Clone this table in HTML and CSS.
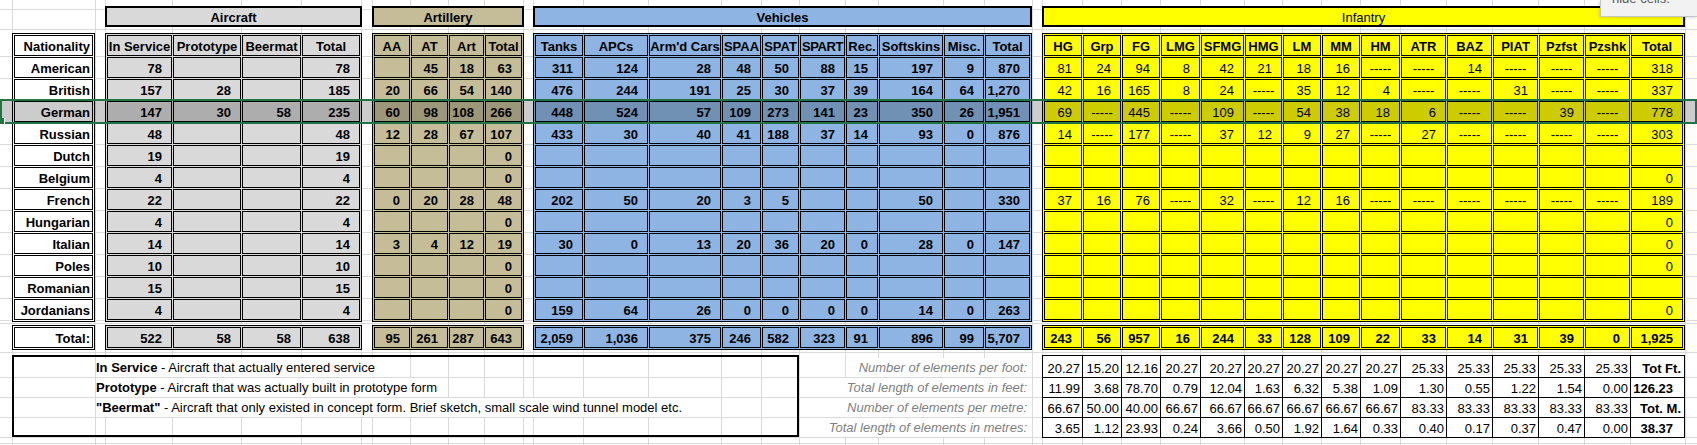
FILE: index.html
```html
<!DOCTYPE html>
<html>
<head>
<meta charset="utf-8">
<title>Unit counts</title>
<link rel="stylesheet" href="styles.css">
</head>
<body>
<div class="sheet">
  <div class="band heads">
    <div class="gh air g-air">Aircraft</div>
    <div class="gh art g-art">Artillery</div>
    <div class="gh veh g-veh">Vehicles</div>
    <div class="gh inf g-inf">Infantry</div>
  </div>

  <div class="band main">
    <div class="tbl nat g-nat">
      <span>Nationality</span><span>American</span><span>British</span><span>German</span><span>Russian</span><span>Dutch</span><span>Belgium</span><span>French</span><span>Hungarian</span><span>Italian</span><span>Poles</span><span>Romanian</span><span>Jordanians</span>
    </div>
    <div class="tbl air g-air">
      <span class="h">In Service</span><span class="h">Prototype</span><span class="h">Beermat</span><span class="h">Total</span>
      <span>78</span><span></span><span></span><span>78</span>
      <span>157</span><span>28</span><span></span><span>185</span>
      <span>147</span><span>30</span><span>58</span><span>235</span>
      <span>48</span><span></span><span></span><span>48</span>
      <span>19</span><span></span><span></span><span>19</span>
      <span>4</span><span></span><span></span><span>4</span>
      <span>22</span><span></span><span></span><span>22</span>
      <span>4</span><span></span><span></span><span>4</span>
      <span>14</span><span></span><span></span><span>14</span>
      <span>10</span><span></span><span></span><span>10</span>
      <span>15</span><span></span><span></span><span>15</span>
      <span>4</span><span></span><span></span><span>4</span>
    </div>
    <div class="tbl art g-art">
      <span class="h">AA</span><span class="h">AT</span><span class="h">Art</span><span class="h">Total</span>
      <span></span><span>45</span><span>18</span><span>63</span>
      <span>20</span><span>66</span><span>54</span><span>140</span>
      <span>60</span><span>98</span><span>108</span><span>266</span>
      <span>12</span><span>28</span><span>67</span><span>107</span>
      <span></span><span></span><span></span><span>0</span>
      <span></span><span></span><span></span><span>0</span>
      <span>0</span><span>20</span><span>28</span><span>48</span>
      <span></span><span></span><span></span><span>0</span>
      <span>3</span><span>4</span><span>12</span><span>19</span>
      <span></span><span></span><span></span><span>0</span>
      <span></span><span></span><span></span><span>0</span>
      <span></span><span></span><span></span><span>0</span>
    </div>
    <div class="tbl veh g-veh">
      <span class="h">Tanks</span><span class="h">APCs</span><span class="h">Arm'd Cars</span><span class="h">SPAA</span><span class="h">SPAT</span><span class="h tight">SPART</span><span class="h">Rec.</span><span class="h">Softskins</span><span class="h">Misc.</span><span class="h">Total</span>
      <span>311</span><span>124</span><span>28</span><span>48</span><span>50</span><span>88</span><span>15</span><span>197</span><span>9</span><span>870</span>
      <span>476</span><span>244</span><span>191</span><span>25</span><span>30</span><span>37</span><span>39</span><span>164</span><span>64</span><span>1,270</span>
      <span>448</span><span>524</span><span>57</span><span>109</span><span>273</span><span>141</span><span>23</span><span>350</span><span>26</span><span>1,951</span>
      <span>433</span><span>30</span><span>40</span><span>41</span><span>188</span><span>37</span><span>14</span><span>93</span><span>0</span><span>876</span>
      <span></span><span></span><span></span><span></span><span></span><span></span><span></span><span></span><span></span><span></span>
      <span></span><span></span><span></span><span></span><span></span><span></span><span></span><span></span><span></span><span></span>
      <span>202</span><span>50</span><span>20</span><span>3</span><span>5</span><span></span><span></span><span>50</span><span></span><span>330</span>
      <span></span><span></span><span></span><span></span><span></span><span></span><span></span><span></span><span></span><span></span>
      <span>30</span><span>0</span><span>13</span><span>20</span><span>36</span><span>20</span><span>0</span><span>28</span><span>0</span><span>147</span>
      <span></span><span></span><span></span><span></span><span></span><span></span><span></span><span></span><span></span><span></span>
      <span></span><span></span><span></span><span></span><span></span><span></span><span></span><span></span><span></span><span></span>
      <span>159</span><span>64</span><span>26</span><span>0</span><span>0</span><span>0</span><span>0</span><span>14</span><span>0</span><span>263</span>
    </div>
    <div class="tbl inf g-inf">
      <span class="h">HG</span><span class="h">Grp</span><span class="h">FG</span><span class="h">LMG</span><span class="h">SFMG</span><span class="h">HMG</span><span class="h">LM</span><span class="h">MM</span><span class="h">HM</span><span class="h">ATR</span><span class="h">BAZ</span><span class="h">PIAT</span><span class="h">Pzfst</span><span class="h">Pzshk</span><span class="h">Total</span>
      <span>81</span><span>24</span><span>94</span><span>8</span><span>42</span><span>21</span><span>18</span><span>16</span><span class="d">-----</span><span class="d">-----</span><span>14</span><span class="d">-----</span><span class="d">-----</span><span class="d">-----</span><span>318</span>
      <span>42</span><span>16</span><span>165</span><span>8</span><span>24</span><span class="d">-----</span><span>35</span><span>12</span><span>4</span><span class="d">-----</span><span class="d">-----</span><span>31</span><span class="d">-----</span><span class="d">-----</span><span>337</span>
      <span>69</span><span class="d">-----</span><span>445</span><span class="d">-----</span><span>109</span><span class="d">-----</span><span>54</span><span>38</span><span>18</span><span>6</span><span class="d">-----</span><span class="d">-----</span><span>39</span><span class="d">-----</span><span>778</span>
      <span>14</span><span class="d">-----</span><span>177</span><span class="d">-----</span><span>37</span><span>12</span><span>9</span><span>27</span><span class="d">-----</span><span>27</span><span class="d">-----</span><span class="d">-----</span><span class="d">-----</span><span class="d">-----</span><span>303</span>
      <span></span><span></span><span></span><span></span><span></span><span></span><span></span><span></span><span></span><span></span><span></span><span></span><span></span><span></span><span></span>
      <span></span><span></span><span></span><span></span><span></span><span></span><span></span><span></span><span></span><span></span><span></span><span></span><span></span><span></span><span>0</span>
      <span>37</span><span>16</span><span>76</span><span class="d">-----</span><span>32</span><span class="d">-----</span><span>12</span><span>16</span><span class="d">-----</span><span class="d">-----</span><span class="d">-----</span><span class="d">-----</span><span class="d">-----</span><span class="d">-----</span><span>189</span>
      <span></span><span></span><span></span><span></span><span></span><span></span><span></span><span></span><span></span><span></span><span></span><span></span><span></span><span></span><span>0</span>
      <span></span><span></span><span></span><span></span><span></span><span></span><span></span><span></span><span></span><span></span><span></span><span></span><span></span><span></span><span>0</span>
      <span></span><span></span><span></span><span></span><span></span><span></span><span></span><span></span><span></span><span></span><span></span><span></span><span></span><span></span><span>0</span>
      <span></span><span></span><span></span><span></span><span></span><span></span><span></span><span></span><span></span><span></span><span></span><span></span><span></span><span></span><span></span>
      <span></span><span></span><span></span><span></span><span></span><span></span><span></span><span></span><span></span><span></span><span></span><span></span><span></span><span></span><span>0</span>
    </div>
  </div>

  <div class="band totals">
    <div class="tbl nat g-nat"><span>Total:</span></div>
    <div class="tbl air g-air"><span>522</span><span>58</span><span>58</span><span>638</span></div>
    <div class="tbl art g-art"><span>95</span><span>261</span><span>287</span><span>643</span></div>
    <div class="tbl veh g-veh"><span>2,059</span><span>1,036</span><span>375</span><span>246</span><span>582</span><span>323</span><span>91</span><span>896</span><span>99</span><span>5,707</span></div>
    <div class="tbl inf inf-tot g-inf"><span>243</span><span>56</span><span>957</span><span>16</span><span>244</span><span>33</span><span>128</span><span>109</span><span>22</span><span>33</span><span>14</span><span>31</span><span>39</span><span>0</span><span>1,925</span></div>
  </div>

  <div class="band bottom">
    <div class="notes">
      <div class="nrow"><span><b>In Service</b> - Aircraft that actually entered service</span></div>
      <div class="nrow"><span><b>Prototype</b> - Aircraft that was actually built in prototype form</span></div>
      <div class="nrow"><span><b>"Beermat"</b> - Aircraft that only existed in concept form. Brief sketch, small scale wind tunnel model etc.</span></div>
    </div>
    <div class="labels">
      <div class="lab"><span>Number of elements per foot:</span></div>
      <div class="lab"><span>Total length of elements in feet:</span></div>
      <div class="lab"><span>Number of elements per metre:</span></div>
      <div class="lab"><span>Total length of elements in metres:</span></div>
    </div>
    <div class="calc">
      <span>20.27</span><span>15.20</span><span>12.16</span><span>20.27</span><span>20.27</span><span>20.27</span><span>20.27</span><span>20.27</span><span>20.27</span><span>25.33</span><span>25.33</span><span>25.33</span><span>25.33</span><span>25.33</span><span class="k">Tot Ft.</span>
      <span>11.99</span><span>3.68</span><span>78.70</span><span>0.79</span><span>12.04</span><span>1.63</span><span>6.32</span><span>5.38</span><span>1.09</span><span>1.30</span><span>0.55</span><span>1.22</span><span>1.54</span><span>0.00</span><span class="t">126.23</span>
      <span>66.67</span><span>50.00</span><span>40.00</span><span>66.67</span><span>66.67</span><span>66.67</span><span>66.67</span><span>66.67</span><span>66.67</span><span>83.33</span><span>83.33</span><span>83.33</span><span>83.33</span><span>83.33</span><span class="k">Tot. M.</span>
      <span>3.65</span><span>1.12</span><span>23.93</span><span>0.24</span><span>3.66</span><span>0.50</span><span>1.92</span><span>1.64</span><span>0.33</span><span>0.40</span><span>0.17</span><span>0.37</span><span>0.47</span><span>0.00</span><span class="t">38.37</span>
    </div>
  </div>

  <div class="sel"><span class="handle"></span></div>
  <div class="tip"><span>hide cells.</span></div>
</div>
</body>
</html>
```

FILE: styles.css
```css
* { box-sizing: border-box; }

body {
  margin: 0;
  background: #fff;
  font-family: "Liberation Sans", Arial, sans-serif;
  font-size: 13px;
  color: #000;
}

.sheet {
  position: relative;
  width: 1697px;
  height: 445px;
  overflow: hidden;
  padding-top: 6px;
  background:
    linear-gradient(#dadada, #dadada) 0 9px / 100% 1px no-repeat,
    linear-gradient(#dadada, #dadada) 0 29px / 100% 1px no-repeat,
    repeating-linear-gradient(to bottom, transparent 0 21px, #dadada 21px 22px) 0 35px / 100% 286px no-repeat,
    linear-gradient(#dadada, #dadada) 0 323px / 100% 1px no-repeat,
    linear-gradient(#dadada, #dadada) 0 352px / 100% 1px no-repeat,
    linear-gradient(#dadada, #dadada) 0 377px / 100% 1px no-repeat,
    linear-gradient(#dadada, #dadada) 0 397px / 100% 1px no-repeat,
    linear-gradient(#dadada, #dadada) 0 417px / 100% 1px no-repeat,
    linear-gradient(#dadada, #dadada) 0 437px / 100% 1px no-repeat,
    linear-gradient(#dadada, #dadada) 0 443px / 100% 1px no-repeat,
    linear-gradient(#dadada, #dadada) 12px 0 / 1px 100% no-repeat,
    linear-gradient(#dadada, #dadada) 95px 0 / 1px 100% no-repeat,
    linear-gradient(#dadada, #dadada) 105px 0 / 1px 100% no-repeat,
    linear-gradient(#dadada, #dadada) 172px 0 / 1px 100% no-repeat,
    linear-gradient(#dadada, #dadada) 241px 0 / 1px 100% no-repeat,
    linear-gradient(#dadada, #dadada) 301px 0 / 1px 100% no-repeat,
    linear-gradient(#dadada, #dadada) 361px 0 / 1px 100% no-repeat,
    linear-gradient(#dadada, #dadada) 372px 0 / 1px 100% no-repeat,
    linear-gradient(#dadada, #dadada) 410px 0 / 1px 100% no-repeat,
    linear-gradient(#dadada, #dadada) 448px 0 / 1px 100% no-repeat,
    linear-gradient(#dadada, #dadada) 484px 0 / 1px 100% no-repeat,
    linear-gradient(#dadada, #dadada) 523px 0 / 1px 100% no-repeat,
    linear-gradient(#dadada, #dadada) 533px 0 / 1px 100% no-repeat,
    linear-gradient(#dadada, #dadada) 583px 0 / 1px 100% no-repeat,
    linear-gradient(#dadada, #dadada) 648px 0 / 1px 100% no-repeat,
    linear-gradient(#dadada, #dadada) 721px 0 / 1px 100% no-repeat,
    linear-gradient(#dadada, #dadada) 761px 0 / 1px 100% no-repeat,
    linear-gradient(#dadada, #dadada) 799px 0 / 1px 100% no-repeat,
    linear-gradient(#dadada, #dadada) 845px 0 / 1px 100% no-repeat,
    linear-gradient(#dadada, #dadada) 878px 0 / 1px 100% no-repeat,
    linear-gradient(#dadada, #dadada) 943px 0 / 1px 100% no-repeat,
    linear-gradient(#dadada, #dadada) 984px 0 / 1px 100% no-repeat,
    linear-gradient(#dadada, #dadada) 1032px 0 / 1px 100% no-repeat,
    linear-gradient(#dadada, #dadada) 1042px 0 / 1px 100% no-repeat,
    linear-gradient(#dadada, #dadada) 1082px 0 / 1px 100% no-repeat,
    linear-gradient(#dadada, #dadada) 1121px 0 / 1px 100% no-repeat,
    linear-gradient(#dadada, #dadada) 1160px 0 / 1px 100% no-repeat,
    linear-gradient(#dadada, #dadada) 1200px 0 / 1px 100% no-repeat,
    linear-gradient(#dadada, #dadada) 1244px 0 / 1px 100% no-repeat,
    linear-gradient(#dadada, #dadada) 1282px 0 / 1px 100% no-repeat,
    linear-gradient(#dadada, #dadada) 1321px 0 / 1px 100% no-repeat,
    linear-gradient(#dadada, #dadada) 1360px 0 / 1px 100% no-repeat,
    linear-gradient(#dadada, #dadada) 1400px 0 / 1px 100% no-repeat,
    linear-gradient(#dadada, #dadada) 1446px 0 / 1px 100% no-repeat,
    linear-gradient(#dadada, #dadada) 1492px 0 / 1px 100% no-repeat,
    linear-gradient(#dadada, #dadada) 1538px 0 / 1px 100% no-repeat,
    linear-gradient(#dadada, #dadada) 1584px 0 / 1px 100% no-repeat,
    linear-gradient(#dadada, #dadada) 1630px 0 / 1px 100% no-repeat,
    linear-gradient(#dadada, #dadada) 1685px 0 / 1px 100% no-repeat,
    #fff;
}

/* column bands shared by every block row */
.band {
  display: grid;
  grid-template-columns: 12px 83px 10px 257px 10px 152px 9px 499px 10px 643px;
}
.heads { height: 21px; margin-bottom: 6px; }
.totals { margin-top: 3px; }
.bottom {
  margin-top: 5px;
  grid-template-columns: 12px 787px 243px 643px;
}

.g-nat { grid-column: 2; }
.g-air { grid-column: 4; }
.g-art { grid-column: 6; }
.g-veh { grid-column: 8; }
.g-inf { grid-column: 10; }

.air { background: #d9d9d9; }
.art { background: #c4bd97; }
.veh { background: #8db4e2; }
.inf { background: #ffff00; }
.nat { background: #fff; }

/* group headers */
.gh {
  height: 21px;
  border: 2px solid #000;
  font-weight: bold;
  text-align: center;
  line-height: 20px;
  white-space: nowrap;
}

/* bordered data blocks */
.tbl {
  display: grid;
  gap: 1px;
  padding: 1px;
  border: 1px solid #000;
  grid-auto-rows: 21px;
  font-weight: bold;
}
.tbl > span {
  display: flex;
  align-items: flex-end;
  justify-content: flex-end;
  border: 1px solid #000;
  line-height: 15px;
  padding: 0 9px 1px 0;
  white-space: nowrap;
}
.tbl > .h,
.tbl > .d {
  justify-content: center;
  padding-right: 0;
}
.tbl > .tight { letter-spacing: -0.4px; }

.nat { grid-template-columns: 79px; }
.nat > span { padding-right: 2px; }
.air { grid-template-columns: 65px 68px 59px 58px; }
.art { grid-template-columns: 36px 37px 35px 37px; }
.veh { grid-template-columns: 48px 64px 72px 39px 37px 45px 32px 64px 40px 45px; }
.inf {
  grid-template-columns: 38px 38px 38px 39px 43px 37px 38px 38px 39px 45px 45px 45px 45px 45px 52px;
  font-weight: normal;
}
.inf > .h { font-weight: bold; }
.inf-tot { font-weight: bold; }

/* notes box */
.notes {
  grid-column: 2;
  height: 82px;
  border: 2px solid #000;
  padding-left: 82px;
  display: grid;
  grid-template-rows: 20px 20px 20px;
}
.nrow {
  display: flex;
  align-items: flex-end;
}
.nrow > span {
  height: 19px;
  line-height: 19px;
  background: #fff;
  padding-right: 2px;
  white-space: nowrap;
}

/* italic labels */
.labels {
  grid-column: 3;
  display: grid;
  grid-template-rows: 22px 20px 20px 20px;
}
.lab {
  display: flex;
  justify-content: flex-end;
  align-items: flex-end;
  padding-right: 15px;
}
.lab > span {
  height: 19px;
  line-height: 19px;
  font-style: italic;
  color: #808080;
  background: #fff;
  padding-left: 3px;
  white-space: nowrap;
}

/* calculation grid */
.calc {
  grid-column: 4;
  display: grid;
  grid-template-columns: 39px 38px 38px 39px 43px 37px 38px 38px 39px 45px 45px 45px 45px 45px 53px;
  grid-template-rows: 21px 19px 19px 19px;
  gap: 1px;
  height: 83px;
  background: #000;
  border: 1px solid #000;
}
.calc > span {
  background: #fff;
  display: flex;
  align-items: flex-end;
  justify-content: flex-end;
  line-height: 15px;
  padding: 0 2px 1px 0;
  white-space: nowrap;
}
.calc > .k { font-weight: bold; padding-right: 3px; }
.calc > .t { font-weight: bold; padding-right: 11px; }

/* Excel row selection over the German row */
.sel {
  position: absolute;
  left: 0;
  top: 99px;
  width: 1697px;
  height: 25px;
  border: 2px solid #217346;
  background: rgba(0, 0, 0, 0.2);
}
.handle {
  position: absolute;
  left: -2px;
  top: 17px;
  width: 5px;
  height: 6px;
  background: #217346;
  border-right: 1px solid #fff;
}

/* cut-off tooltip in the top right corner */
.tip {
  position: absolute;
  top: 0;
  right: 0;
  width: 97px;
  height: 17px;
  background: #f2f2f2;
  border-left: 1px solid #c6c6c6;
  border-bottom: 1px solid #c6c6c6;
  box-shadow: -1px 1px 3px rgba(0, 0, 0, 0.15);
  overflow: hidden;
  color: #595959;
  padding-left: 11px;
}
.tip > span {
  display: block;
  margin-top: -9px;
  line-height: 16px;
  white-space: nowrap;
}
```
